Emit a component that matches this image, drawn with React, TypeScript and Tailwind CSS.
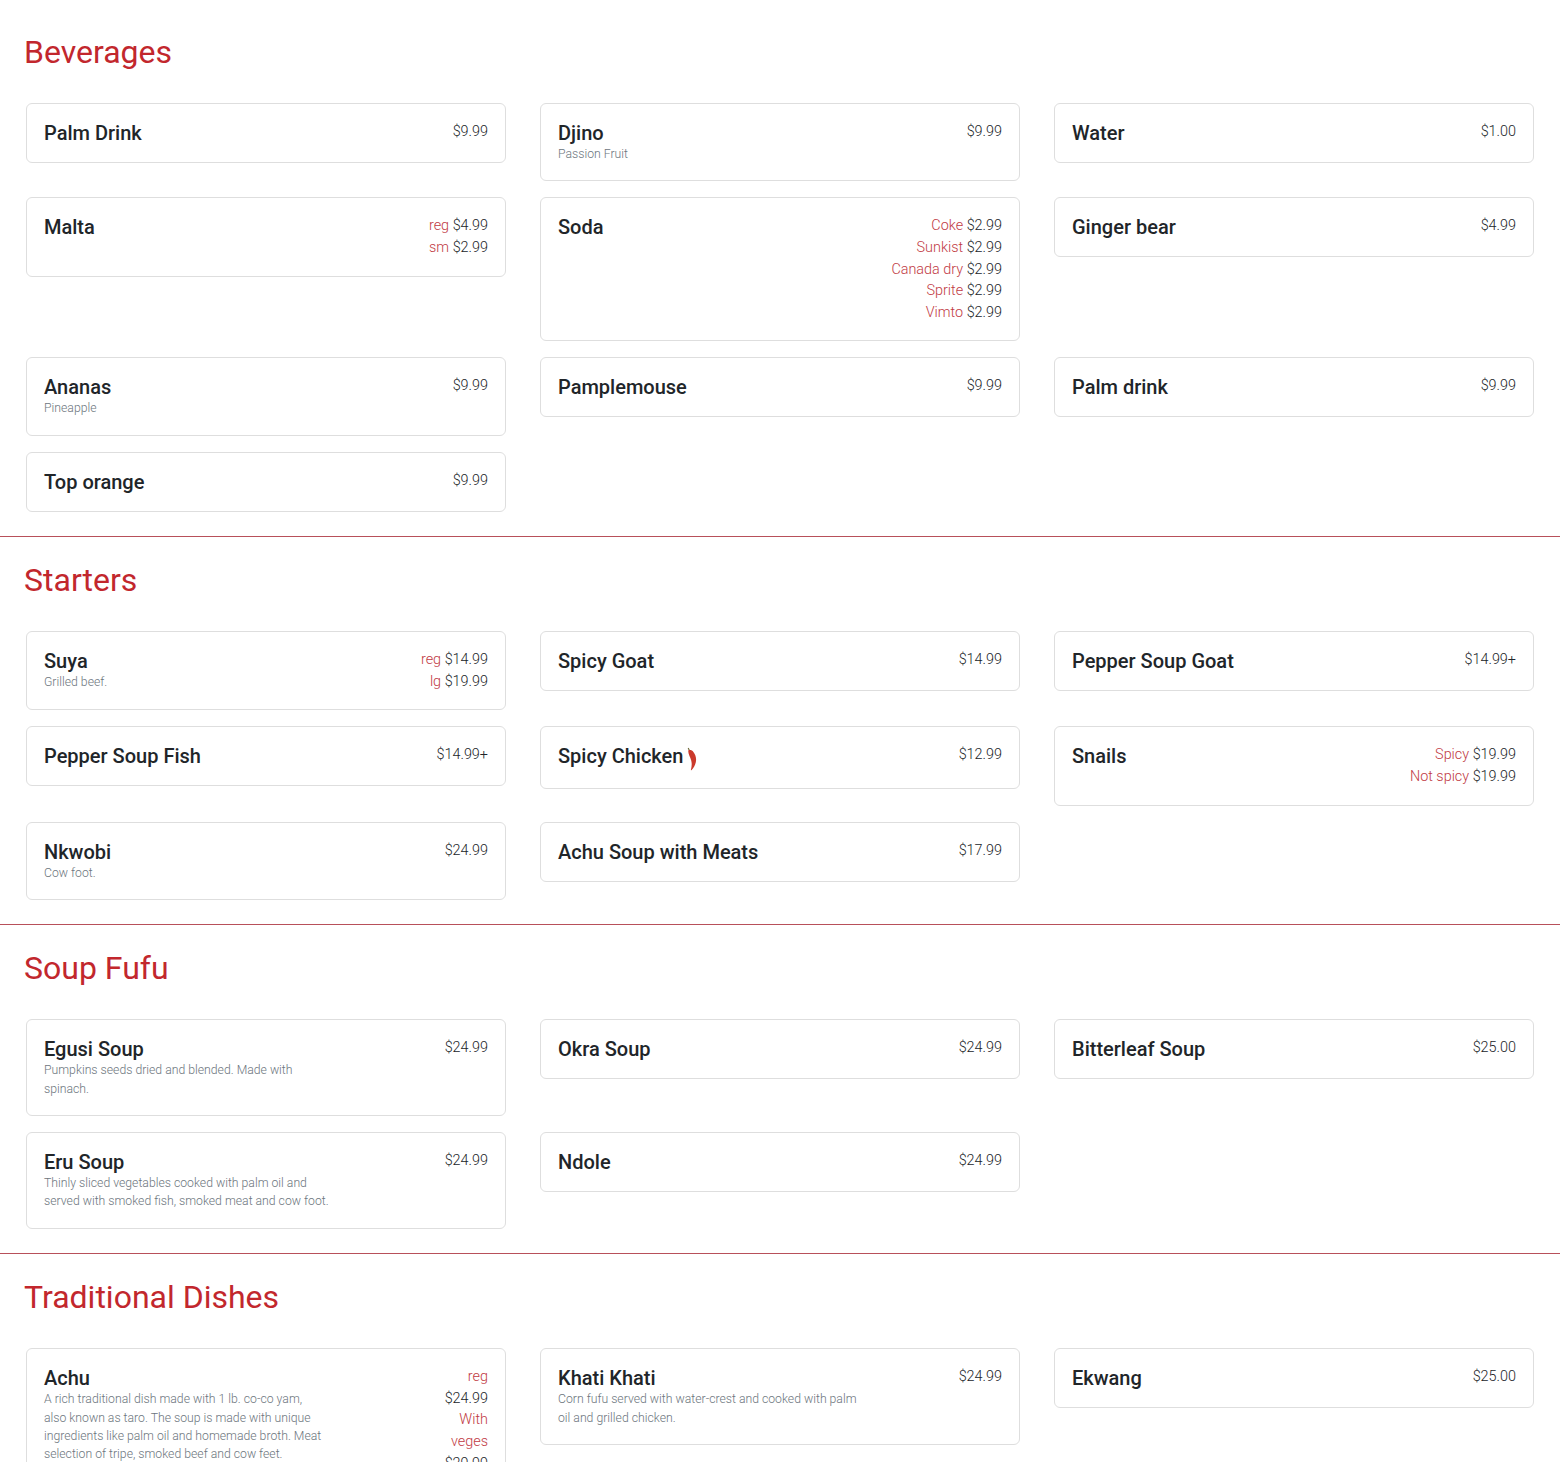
type Price = { label?: string; value: string };

type Dish = {
  name: string;
  desc?: string;
  prices: Price[];
  spicy?: boolean;
  narrowPrice?: boolean;
};

type Section = { title: string; dishes: Dish[] };

const one = (value: string): Price[] => [{ value }];

const sections: Section[] = [
  {
    title: "Beverages",
    dishes: [
      { name: "Palm Drink", prices: one("$9.99") },
      { name: "Djino", desc: "Passion Fruit", prices: one("$9.99") },
      { name: "Water", prices: one("$1.00") },
      {
        name: "Malta",
        prices: [
          { label: "reg", value: "$4.99" },
          { label: "sm", value: "$2.99" },
        ],
      },
      {
        name: "Soda",
        prices: [
          { label: "Coke", value: "$2.99" },
          { label: "Sunkist", value: "$2.99" },
          { label: "Canada dry", value: "$2.99" },
          { label: "Sprite", value: "$2.99" },
          { label: "Vimto", value: "$2.99" },
        ],
      },
      { name: "Ginger bear", prices: one("$4.99") },
      { name: "Ananas", desc: "Pineapple", prices: one("$9.99") },
      { name: "Pamplemouse", prices: one("$9.99") },
      { name: "Palm drink", prices: one("$9.99") },
      { name: "Top orange", prices: one("$9.99") },
    ],
  },
  {
    title: "Starters",
    dishes: [
      {
        name: "Suya",
        desc: "Grilled beef.",
        prices: [
          { label: "reg", value: "$14.99" },
          { label: "lg", value: "$19.99" },
        ],
      },
      { name: "Spicy Goat", prices: one("$14.99") },
      { name: "Pepper Soup Goat", prices: one("$14.99+") },
      { name: "Pepper Soup Fish", prices: one("$14.99+") },
      { name: "Spicy Chicken", spicy: true, prices: one("$12.99") },
      {
        name: "Snails",
        prices: [
          { label: "Spicy", value: "$19.99" },
          { label: "Not spicy", value: "$19.99" },
        ],
      },
      { name: "Nkwobi", desc: "Cow foot.", prices: one("$24.99") },
      { name: "Achu Soup with Meats", prices: one("$17.99") },
    ],
  },
  {
    title: "Soup Fufu",
    dishes: [
      {
        name: "Egusi Soup",
        desc: "Pumpkins seeds dried and blended. Made with\nspinach.",
        prices: one("$24.99"),
      },
      { name: "Okra Soup", prices: one("$24.99") },
      { name: "Bitterleaf Soup", prices: one("$25.00") },
      {
        name: "Eru Soup",
        desc: "Thinly sliced vegetables cooked with palm oil and\nserved with smoked fish, smoked meat and cow foot.",
        prices: one("$24.99"),
      },
      { name: "Ndole", prices: one("$24.99") },
    ],
  },
  {
    title: "Traditional Dishes",
    dishes: [
      {
        name: "Achu",
        desc: "A rich traditional dish made with 1 lb. co-co yam,\nalso known as taro. The soup is made with unique\ningredients like palm oil and homemade broth. Meat\nselection of tripe, smoked beef and cow feet.",
        narrowPrice: true,
        prices: [
          { label: "reg", value: "$24.99" },
          { label: "With veges", value: "$29.99" },
        ],
      },
      {
        name: "Khati Khati",
        desc: "Corn fufu served with water-crest and cooked with palm\noil and grilled chicken.",
        prices: one("$24.99"),
      },
      { name: "Ekwang", prices: one("$25.00") },
    ],
  },
];

function Chili() {
  return (
    <svg viewBox="0 0 10 24" className="ml-[4px] inline-block h-[24px] w-[10px] align-[-8px]" aria-hidden="true">
      <path d="M1.2 1 C1.6 2 1.8 2.6 2.4 3.2" fill="none" stroke="#6f6a3a" strokeWidth="1.1" />
      <path
        d="M1.2 3.6 C3 2.6 5 3.2 6.4 5 C8.4 7.4 9.4 10.6 9 14 C8.6 17.6 6.8 21 4.4 23.2 C4 23.5 3.8 23.2 3.9 22.8 C4.8 19.6 5 16.4 4.2 13.4 C3.4 10.4 1.2 7.6 1.2 3.6 Z"
        fill="#cb3a2c"
      />
    </svg>
  );
}

function DishCard({ dish }: { dish: Dish }) {
  return (
    <div className="flex justify-between rounded-[6px] border border-[#dedede] bg-white p-[17px]">
      <div>
        <div className="text-[20px] leading-[24px] font-medium text-[#212529]">
          {dish.name}
          {dish.spicy && <Chili />}
        </div>
        {dish.desc && (
          <p className="text-[12.24px] leading-[18.36px] font-light whitespace-pre-line text-[#6c757d]">{dish.desc}</p>
        )}
      </div>
      <div className={`text-right text-[14.4px] leading-[21.6px] font-light text-[#212529] ${dish.narrowPrice ? "w-[50px]" : ""}`}>
        {dish.prices.map((price) => (
          <div key={price.value + price.label}>
            {price.label && <span className="text-[#c13a44]">{price.label} </span>}
            {price.value}
          </div>
        ))}
      </div>
    </div>
  );
}

export default function App() {
  return (
    <div className="h-[1462px] overflow-hidden bg-white font-['Roboto',sans-serif]">
      {sections.map((section, index) => (
        <section key={section.title} className={index === 0 ? "pt-[32.6px] pb-[24px]" : "border-t border-[#b8505a] pt-[24.04px] pb-[24px]"}>
          <h2 className="pl-[24px] text-[32px] leading-[38.4px] font-normal text-[#c2272d]">{section.title}</h2>
          <div className="mt-[32px] grid grid-cols-3 items-start gap-x-[34px] gap-y-[16px] px-[26px]">
            {section.dishes.map((dish) => (
              <DishCard key={dish.name} dish={dish} />
            ))}
          </div>
        </section>
      ))}
    </div>
  );
}
